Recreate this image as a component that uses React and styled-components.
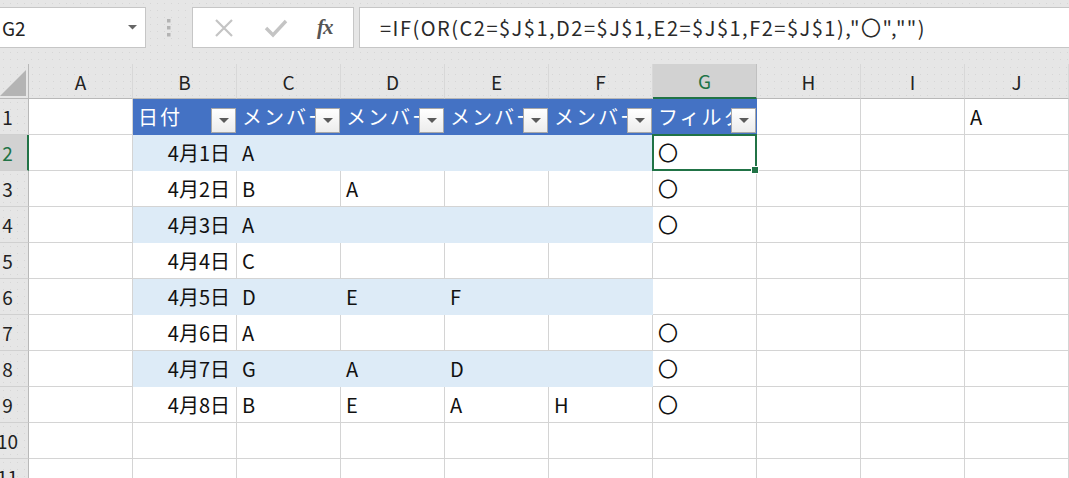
import React from 'react';
import styled, { createGlobalStyle } from 'styled-components';

const GlobalStyle = createGlobalStyle`
    body {
        margin: 0;
        background: #ffffff;
        font-family: "Noto Sans CJK JP", "Noto Sans", sans-serif;
        overflow: hidden;
    }
`

const dotted = `
    background-color: #e6e6e6;
    background-image: radial-gradient(#d6d6d6 0.7px, transparent 0.9px);
    background-size: 7px 7px;
`

const Page = styled.div`
    width: 1069px;
    height: 478px;
    overflow: hidden;
`
const TopBar = styled.div`
    ${dotted}
    height: 64px;
    box-sizing: border-box;
    padding-top: 7px;
    display: flex;
    align-items: flex-start;
`
const NameBox = styled.div`
    width: 146px;
    height: 41px;
    box-sizing: border-box;
    background: #fff;
    border: 1px solid #c6c6c6;
    border-left: none;
    display: flex;
    align-items: center;
    justify-content: space-between;
    padding: 0 8px 0 2px;
    font-size: 19px;
    color: #222;
`
const Grip = styled.div`
    width: 46px;
    height: 41px;
    display: flex;
    align-items: center;
    justify-content: center;
`
const ButtonGroup = styled.div`
    width: 162px;
    height: 41px;
    box-sizing: border-box;
    background: #fff;
    border: 1px solid #c6c6c6;
    display: flex;
    align-items: center;
    justify-content: space-around;
    padding: 0 6px;
`
const Fx = styled.span`
    font-family: "Liberation Serif", serif;
    font-style: italic;
    font-weight: bold;
    font-size: 21px;
    color: #555;
    letter-spacing: -1px;
`
const FormulaBox = styled.div`
    flex: 1;
    margin-left: 5px;
    height: 41px;
    box-sizing: border-box;
    background: #fff;
    border: 1px solid #c6c6c6;
    border-right: none;
    display: flex;
    align-items: center;
    padding-left: 20px;
    font-size: 20px;
    letter-spacing: 1.5px;
    color: #2a2a2a;
    white-space: nowrap;
`
const Sheet = styled.div`
    display: grid;
    grid-template-columns: 29px repeat(10, 104px);
    grid-template-rows: 35px;
    grid-auto-rows: 36px;
`
const Corner = styled.div`
    ${dotted}
    box-sizing: border-box;
    border-right: 1px solid #b8b8b8;
    border-bottom: 1px solid #b8b8b8;
    display: flex;
    align-items: flex-end;
    padding: 0 2px 2px 0;
`
const ColHead = styled.div`
    ${p => p.$active ? 'background: #d2d2d2;' : dotted}
    box-sizing: border-box;
    border-right: 1px solid ${p => p.$active ? '#c0c0c0' : '#d8d8d8'};
    border-bottom: ${p => p.$active ? '2px solid #217346' : '1px solid #b8b8b8'};
    display: flex;
    align-items: center;
    justify-content: center;
    font-size: 19px;
    color: ${p => p.$active ? '#217346' : '#222'};
`
const RowHead = styled.div`
    ${p => p.$active ? 'background: #d2d2d2;' : dotted}
    box-sizing: border-box;
    border-right: ${p => p.$active ? '2px solid #217346' : '1px solid #b8b8b8'};
    border-bottom: 1px solid #d0d0d0;
    display: flex;
    align-items: center;
    justify-content: center;
    padding-right: ${p => p.$active ? '12px' : '13px'};
    font-size: 19px;
    color: ${p => p.$active ? '#217346' : '#222'};
    white-space: nowrap;
`
const tone = {
    plain: { bg: '#ffffff', line: '#d4d4d4', color: '#111' },
    band: { bg: '#ddebf7', line: '#ddebf7', color: '#111' },
    head: { bg: '#4472c4', line: '#4472c4', color: '#ffffff' },
}
const Cell = styled.div`
    position: relative;
    box-sizing: border-box;
    background: ${p => tone[p.$tone].bg};
    border-right: 1px solid ${p => tone[p.$tone].line};
    border-bottom: 1px solid ${p => tone[p.$tone].line};
    color: ${p => tone[p.$tone].color};
    font-size: 20px;
    display: flex;
    align-items: center;
    justify-content: ${p => p.$right ? 'flex-end' : 'flex-start'};
    padding: 0 6px 0 5px;
    white-space: nowrap;
    overflow: hidden;
    letter-spacing: ${p => p.$tone === 'head' ? '2px' : '0'};
    ${p => p.$selected && `
        overflow: visible;
        &::after {
            content: '';
            position: absolute;
            inset: -1px;
            border: 2px solid #217346;
            pointer-events: none;
        }
        &::before {
            content: '';
            position: absolute;
            right: -3px;
            bottom: -4px;
            width: 6px;
            height: 6px;
            background: #217346;
            border: 1px solid #fff;
            z-index: 2;
        }
    `}
`
const FilterButton = styled.div`
    position: absolute;
    right: 0;
    top: 9px;
    width: 25px;
    height: 25px;
    box-sizing: border-box;
    background: linear-gradient(#ffffff, #ececec);
    border: 1px solid #a8a8a8;
    display: flex;
    align-items: center;
    justify-content: center;
`

const Caret = ({ w = 10, color = '#555' }) => (
    <svg width={w} height={w / 2 + 1} viewBox="0 0 10 6">
        <path d="M0 0 L10 0 L5 5 Z" fill={color} />
    </svg>
)

const XIcon = () => (
    <svg width="22" height="22" viewBox="0 0 22 22">
        <path d="M3 3 L19 19 M19 3 L3 19" stroke="#c4c4c4" strokeWidth="2.2" />
    </svg>
)
const CheckIcon = () => (
    <svg width="24" height="22" viewBox="0 0 24 22">
        <path d="M2 11 L9 18 L22 4" stroke="#c4c4c4" strokeWidth="3.4" fill="none" />
    </svg>
)

const cols = ['A', 'B', 'C', 'D', 'E', 'F', 'G', 'H', 'I', 'J']
const headers = ['日付', 'メンバー1', 'メンバー2', 'メンバー3', 'メンバー4', 'フィルタ']
const data = [
    ['4月1日', 'A', '', '', '', '〇'],
    ['4月2日', 'B', 'A', '', '', '〇'],
    ['4月3日', 'A', '', '', '', '〇'],
    ['4月4日', 'C', '', '', '', ''],
    ['4月5日', 'D', 'E', 'F', '', ''],
    ['4月6日', 'A', '', '', '', '〇'],
    ['4月7日', 'G', 'A', 'D', '', '〇'],
    ['4月8日', 'B', 'E', 'A', 'H', '〇'],
]

const App = () => {
    const rows = []
    // row 1: table header in B..G, "A" in J
    rows.push(
        <React.Fragment key="r1">
            <RowHead>1</RowHead>
            <Cell $tone="plain" />
            {headers.map((h, i) => (
                <Cell key={h + i} $tone="head">
                    {h}
                    <FilterButton><Caret w={10} color="#5a5a5a" /></FilterButton>
                </Cell>
            ))}
            <Cell $tone="plain" />
            <Cell $tone="plain" />
            <Cell $tone="plain">A</Cell>
        </React.Fragment>
    )
    data.forEach((r, i) => {
        const n = i + 2
        const band = n % 2 === 0
        rows.push(
            <React.Fragment key={'r' + n}>
                <RowHead $active={n === 2}>{n}</RowHead>
                <Cell $tone="plain" />
                {r.slice(0, 5).map((v, j) => (
                    <Cell key={j} $tone={band ? 'band' : 'plain'} $right={j === 0}>{v}</Cell>
                ))}
                <Cell $tone="plain" $selected={n === 2}>{r[5]}</Cell>
                <Cell $tone="plain" />
                <Cell $tone="plain" />
                <Cell $tone="plain" />
            </React.Fragment>
        )
    })
    ;[10, 11].forEach(n => {
        rows.push(
            <React.Fragment key={'r' + n}>
                <RowHead>{n}</RowHead>
                {cols.map(c => <Cell key={c} $tone="plain" />)}
            </React.Fragment>
        )
    })

    return (
        <Page>
            <GlobalStyle />
            <TopBar>
                <NameBox>
                    <span>G2</span>
                    <Caret w={9} color="#666" />
                </NameBox>
                <Grip>
                    <svg width="4" height="18" viewBox="0 0 4 18">
                        <rect x="0" y="0" width="3.5" height="3.5" fill="#b3b3b3" />
                        <rect x="0" y="7" width="3.5" height="3.5" fill="#b3b3b3" />
                        <rect x="0" y="14" width="3.5" height="3.5" fill="#b3b3b3" />
                    </svg>
                </Grip>
                <ButtonGroup>
                    <XIcon />
                    <CheckIcon />
                    <Fx>fx</Fx>
                </ButtonGroup>
                <FormulaBox>=IF(OR(C2=$J$1,D2=$J$1,E2=$J$1,F2=$J$1),"〇","")</FormulaBox>
            </TopBar>
            <Sheet>
                <Corner>
                    <svg width="26" height="26" viewBox="0 0 26 26">
                        <path d="M26 0 L26 26 L0 26 Z" fill="#b4b4b4" />
                    </svg>
                </Corner>
                {cols.map(c => <ColHead key={c} $active={c === 'G'}>{c}</ColHead>)}
                {rows}
            </Sheet>
        </Page>
    )
}

export default App
